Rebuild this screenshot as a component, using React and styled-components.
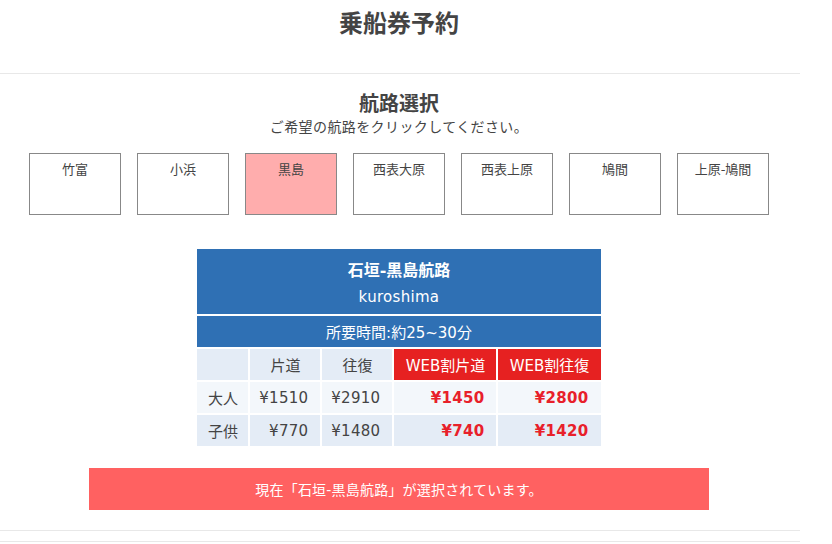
import React, { useState } from "react";
import styled, { createGlobalStyle } from "styled-components";

const GlobalStyle = createGlobalStyle`
  html, body { margin: 0; padding: 0; background: #fff; }
  body {
    font-family: "DejaVu Sans", "Noto Sans CJK JP", sans-serif;
    color: #444;
  }
`;

const Page = styled.div`
  width: 800px;
`;

const Inner = styled.div`
  width: 798px;
`;

const Header = styled.header`
  height: 73px;
  border-bottom: 1px solid #e8e8e8;
`;

const Title = styled.h1`
  margin: 0;
  font-family: "Noto Sans CJK JP", sans-serif;
  font-size: 24px;
  font-weight: 700;
  line-height: 44px;
  text-align: center;
  color: #444;
`;

const Section = styled.section`
  padding-top: 16px;
  padding-bottom: 20px;
  border-bottom: 1px solid #e8e8e8;
`;

const SectionTitle = styled.h2`
  margin: 0;
  font-family: "Noto Sans CJK JP", sans-serif;
  font-size: 20px;
  font-weight: 700;
  line-height: 26px;
  text-align: center;
  color: #444;
`;

const Lead = styled.p`
  margin: 0;
  font-family: "Noto Sans CJK JP", sans-serif;
  font-size: 14px;
  letter-spacing: 0.4px;
  line-height: 20px;
  text-align: center;
  color: #444;
`;

const RouteRow = styled.div`
  display: flex;
  justify-content: center;
  gap: 16px;
  margin-top: 17px;
`;

const RouteButton = styled.button`
  box-sizing: border-box;
  width: 92px;
  height: 62px;
  padding: 6px 0 0;
  border: 1px solid #888;
  background: ${(p) => (p.$active ? "#ffadad" : "#fff")};
  font-family: "DejaVu Sans", "Noto Sans CJK JP", sans-serif;
  font-size: 13px;
  line-height: 20px;
  color: #444;
  display: flex;
  justify-content: center;
  align-items: flex-start;
  cursor: pointer;
`;

const TableWrap = styled.div`
  display: flex;
  justify-content: center;
  margin-top: 32px;
`;

const FareTable = styled.table`
  border-collapse: separate;
  border-spacing: 2px;
  table-layout: fixed;
  width: 407px;
  font-size: 15px;
`;

const RouteHead = styled.th`
  background: #2f70b4;
  color: #fff;
  padding: 10px 0 3px;
  font-weight: 400;
`;

const RouteName = styled.div`
  font-family: "DejaVu Sans", "Noto Sans CJK JP", sans-serif;
  font-size: 16px;
  font-weight: 700;
  line-height: 24px;
`;

const RouteRoman = styled.div`
  font-size: 15px;
  line-height: 28px;
  letter-spacing: 0.3px;
`;

const TimeCell = styled.th`
  background: #2f70b4;
  color: #fff;
  height: 31px;
  padding: 0;
  font-weight: 400;
  font-size: 15px;
`;

const HeadCell = styled.th`
  height: 31px;
  padding: 0;
  font-weight: 400;
  text-align: center;
  background: ${(p) => (p.$web ? "#e62121" : "#e4ecf6")};
  color: ${(p) => (p.$web ? "#fff" : "#444")};
`;

const LabelCell = styled.td`
  height: 31px;
  padding: 0;
  text-align: center;
  background: ${(p) => (p.$alt ? "#e4ecf6" : "#f3f7fb")};
  color: #444;
`;

const PriceCell = styled.td`
  height: 31px;
  padding: 0 12px 0 0;
  text-align: right;
  background: ${(p) => (p.$alt ? "#e4ecf6" : "#f3f7fb")};
  color: ${(p) => (p.$web ? "#e8202a" : "#444")};
  font-weight: ${(p) => (p.$web ? 700 : 400)};
  letter-spacing: 0.3px;
`;

const Notice = styled.div`
  box-sizing: border-box;
  width: 620px;
  height: 42px;
  margin: 20px auto 0;
  background: #ff6161;
  color: #fff;
  font-family: "DejaVu Sans", "Noto Sans CJK JP", sans-serif;
  font-size: 14px;
  letter-spacing: 0.2px;
  display: flex;
  align-items: center;
  justify-content: center;
`;

const Footer = styled.div`
  height: 10px;
  border-bottom: 1px solid #e8e8e8;
`;

const routes = ["竹富", "小浜", "黒島", "西表大原", "西表上原", "鳩間", "上原-鳩間"];

const fares = [
  { label: "大人", one: "¥1510", round: "¥2910", webOne: "¥1450", webRound: "¥2800" },
  { label: "子供", one: "¥770", round: "¥1480", webOne: "¥740", webRound: "¥1420", alt: true },
];

export default function App() {
  const [active, setActive] = useState("黒島");
  return (
    <Page>
      <GlobalStyle />
      <Header>
        <Inner>
          <Title>乗船券予約</Title>
        </Inner>
      </Header>
      <Section>
        <Inner>
          <SectionTitle>航路選択</SectionTitle>
          <Lead>ご希望の航路をクリックしてください。</Lead>
          <RouteRow>
            {routes.map((r) => (
              <RouteButton key={r} $active={r === active} onClick={() => setActive(r)}>
                {r}
              </RouteButton>
            ))}
          </RouteRow>
          <TableWrap>
            <FareTable>
              <colgroup>
                <col style={{ width: 51 }} />
                <col style={{ width: 70 }} />
                <col style={{ width: 70 }} />
                <col style={{ width: 102 }} />
                <col style={{ width: 102 }} />
              </colgroup>
              <thead>
                <tr>
                  <RouteHead colSpan={5}>
                    <RouteName>石垣-黒島航路</RouteName>
                    <RouteRoman>kuroshima</RouteRoman>
                  </RouteHead>
                </tr>
                <tr>
                  <TimeCell colSpan={5}>所要時間:約25~30分</TimeCell>
                </tr>
                <tr>
                  <HeadCell />
                  <HeadCell>片道</HeadCell>
                  <HeadCell>往復</HeadCell>
                  <HeadCell $web>WEB割片道</HeadCell>
                  <HeadCell $web>WEB割往復</HeadCell>
                </tr>
              </thead>
              <tbody>
                {fares.map((f) => (
                  <tr key={f.label}>
                    <LabelCell $alt={f.alt}>{f.label}</LabelCell>
                    <PriceCell $alt={f.alt}>{f.one}</PriceCell>
                    <PriceCell $alt={f.alt}>{f.round}</PriceCell>
                    <PriceCell $alt={f.alt} $web>{f.webOne}</PriceCell>
                    <PriceCell $alt={f.alt} $web>{f.webRound}</PriceCell>
                  </tr>
                ))}
              </tbody>
            </FareTable>
          </TableWrap>
          <Notice>現在「石垣-黒島航路」が選択されています。</Notice>
        </Inner>
      </Section>
      <Footer />
    </Page>
  );
}
